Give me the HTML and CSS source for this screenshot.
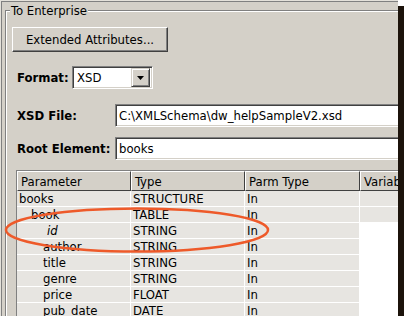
FILE: index.html
```html
<!DOCTYPE html>
<html lang="en">
<head>
  <meta charset="UTF-8">
  <title>To Enterprise</title>
  <link rel="stylesheet" href="styles.css">
</head>
<body>
  <div class="shot">
    <fieldset class="group">
      <legend>To Enterprise</legend>

      <button type="button" class="btn">Extended Attributes...</button>

      <div class="row row-format">
        <span class="lbl lbl-short">Format:</span>
        <div class="combo">
          <span class="combo-val">XSD</span>
          <span class="combo-btn">
            <svg width="7" height="4" viewBox="0 0 7 4"><path d="M0 0h7L3.5 4z" fill="#000"/></svg>
          </span>
        </div>
      </div>

      <div class="row row-file">
        <span class="lbl">XSD File:</span>
        <div class="field">C:\XMLSchema\dw_helpSampleV2.xsd</div>
      </div>

      <div class="row row-root">
        <span class="lbl">Root Element:</span>
        <div class="field">books</div>
      </div>

      <table class="grid">
        <colgroup>
          <col style="width: 114px">
          <col style="width: 114px">
          <col style="width: 115px">
          <col style="width: 80px">
        </colgroup>
        <thead>
          <tr><th>Parameter</th><th>Type</th><th>Parm Type</th><th>Variable</th></tr>
        </thead>
        <tbody>
          <tr><td>books</td><td>STRUCTURE</td><td>In</td><td></td></tr>
          <tr><td class="lvl1">book</td><td>TABLE</td><td>In</td><td></td></tr>
          <tr><td class="lvl2 key">id</td><td>STRING</td><td>In</td><td class="blank"></td></tr>
          <tr><td class="lvl2">author</td><td>STRING</td><td>In</td><td class="blank"></td></tr>
          <tr><td class="lvl2">title</td><td>STRING</td><td>In</td><td class="blank"></td></tr>
          <tr><td class="lvl2">genre</td><td>STRING</td><td>In</td><td class="blank"></td></tr>
          <tr><td class="lvl2">price</td><td>FLOAT</td><td>In</td><td class="blank"></td></tr>
          <tr><td class="lvl2">pub_date</td><td>DATE</td><td>In</td><td class="blank"></td></tr>
        </tbody>
      </table>
    </fieldset>

    <!-- hand-drawn highlight over the grid -->
    <svg class="mark" width="398" height="316" viewBox="0 0 398 316">
      <ellipse cx="137" cy="230" rx="131" ry="21.5" fill="none" stroke="#ee5a2a" stroke-width="2.5"/>
    </svg>
  </div>
</body>
</html>
```

FILE: styles.css
```css
body {
  margin: 0;
  background-color: #ffffff;
  font-family: "DejaVu Sans Condensed", "Liberation Sans", sans-serif;
  font-size: 13px;
  color: #000000;
}
.shot {
  position: relative;
  width: 398px;
  height: 316px;
  overflow: hidden;
  background-color: #d4d0c8;
  box-shadow: inset 1px 1px 0 #e4e1da, inset 2px 2px 0 #808080, 6px 6px 0 #1c130b, 4px 6px 0 #1c130b;
}
.group {
  width: 440px;
  min-width: 0;
  margin: 2px 0 0 5px;
  padding: 9px 0 0 6px;
  border: 1px solid #808080;
  box-shadow: inset 1px 1px 0 #ffffff;
}
.group legend {
  position: relative;
  top: 1px;
  margin-left: -2px;
  padding: 0 1px;
  line-height: 16px;
  background-color: #d4d0c8;
}
.btn {
  display: block;
  width: 156px;
  height: 25px;
  margin: 0;
  padding: 0;
  font: inherit;
  color: #000000;
  background-color: #d4d0c8;
  border: 1px solid;
  border-color: #ffffff #404040 #404040 #ffffff;
  box-shadow: inset -1px -1px 0 #808080;
}
.row {
  display: flex;
  align-items: center;
  padding-left: 5px;
}
.row-format {
  margin-top: 14px;
}
.row-file {
  margin-top: 15px;
}
.row-root {
  margin-top: 10px;
}
.lbl {
  flex: none;
  width: 98px;
  font-weight: bold;
}
.lbl-short {
  width: 55px;
}
.combo,
.field {
  box-sizing: border-box;
  height: 23px;
  display: flex;
  align-items: center;
  background-color: #ffffff;
  border: 1px solid;
  border-color: #808080 #ffffff #ffffff #808080;
  box-shadow: inset 1px 1px 0 #404040, inset -1px -1px 0 #d4d0c8;
}
.combo {
  width: 81px;
  padding: 2px;
}
.combo-val {
  flex: 1;
  padding-left: 2px;
}
.combo-btn {
  box-sizing: border-box;
  width: 19px;
  height: 19px;
  display: flex;
  align-items: center;
  justify-content: center;
  background-color: #d4d0c8;
  border: 1px solid;
  border-color: #d4d0c8 #404040 #404040 #d4d0c8;
  box-shadow: inset 1px 1px 0 #ffffff, inset -1px -1px 0 #808080;
}
.field {
  flex: none;
  width: 320px;
  padding-left: 3px;
  white-space: nowrap;
}
.grid {
  margin: 10px 0 0 4px;
  table-layout: fixed;
  width: 423px;
  border-collapse: separate;
  border-spacing: 0;
  border-left: 1px solid #808080;
  border-top: 1px solid #808080;
}
.grid th {
  height: 18px;
  padding: 0 0 0 3px;
  text-align: left;
  font-weight: normal;
  white-space: nowrap;
  overflow: hidden;
  background-color: #d4d0c8;
  border: 1px solid;
  border-color: #ffffff #404040 #404040 #ffffff;
}
.grid td {
  height: 15px;
  padding: 0 0 0 2px;
  line-height: 15px;
  white-space: nowrap;
  overflow: hidden;
  background-color: #e7e5e1;
  border-right: 1px solid #ffffff;
  border-bottom: 1px solid #ffffff;
}
.grid td.lvl1 {
  padding-left: 14px;
}
.grid td.lvl2 {
  padding-left: 26px;
}
.grid td.key {
  padding-left: 30px;
  font-style: italic;
}
.grid td.blank {
  background-color: #ffffff;
}
.mark {
  position: absolute;
  left: 0;
  top: 0;
  pointer-events: none;
}
```
